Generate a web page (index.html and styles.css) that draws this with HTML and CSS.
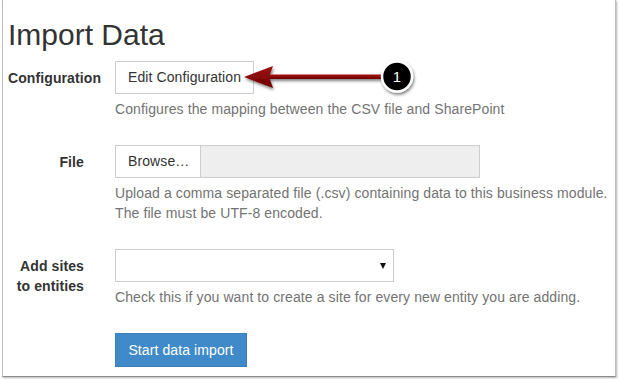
FILE: index.html
```html
<!DOCTYPE html>
<html lang="en">
<head>
    <meta charset="UTF-8">
    <title>Import Data</title>
    <link rel="stylesheet" href="styles.css">
</head>
<body>
<div class="page">
    <div class="frame">
        <h1 class="title">Import Data</h1>

        <form class="import-form">
            <div class="form-row">
                <label class="form-label">Configuration</label>
                <div class="form-control-col">
                    <button type="button" class="btn btn-default">Edit Configuration</button>
                    <p class="help-block">Configures the mapping between the CSV file and SharePoint</p>
                </div>
            </div>

            <div class="form-row">
                <label class="form-label">File</label>
                <div class="form-control-col">
                    <div class="file-group">
                        <span class="file-browse">Browse&hellip;</span>
                        <span class="file-name"></span>
                    </div>
                    <p class="help-block">Upload a comma separated file (.csv) containing data to this business module. The file must be UTF-8 encoded.</p>
                </div>
            </div>

            <div class="form-row">
                <label class="form-label">Add sites to entities</label>
                <div class="form-control-col">
                    <div class="select-box">
                        <span class="select-caret"></span>
                    </div>
                    <p class="help-block">Check this if you want to create a site for every new entity you are adding.</p>
                </div>
            </div>

            <div class="form-row">
                <div></div>
                <div class="form-control-col">
                    <button type="button" class="btn btn-primary">Start data import</button>
                </div>
            </div>
        </form>
    </div>

    <!-- callout arrow pointing at the config button -->
    <svg class="callout" width="619" height="379" viewBox="0 0 619 379">
        <defs>
            <filter id="shadow" x="-20%" y="-50%" width="140%" height="200%">
                <feDropShadow dx="1" dy="2" stdDeviation="1.5" flood-color="#000" flood-opacity="0.5"/>
            </filter>
            <linearGradient id="red" x1="0" y1="0" x2="0" y2="1">
                <stop offset="0" stop-color="#a11010"/>
                <stop offset="1" stop-color="#6d0000"/>
            </linearGradient>
        </defs>
        <g filter="url(#shadow)">
            <rect x="266" y="74.5" width="120" height="4.5" fill="url(#red)"/>
            <polygon points="244,77 273,66 269,77 273,88" fill="url(#red)"/>
            <circle cx="397" cy="76.5" r="15" fill="#000" stroke="#fff" stroke-width="2.5"/>
        </g>
        <text x="397" y="81.5" text-anchor="middle" class="callout-num">1</text>
    </svg>
</div>
</body>
</html>
```

FILE: styles.css
```css
body {
    margin: 0;
    background: #fff;
    font-family: "Liberation Sans", Arial, sans-serif;
    font-size: 14px;
    letter-spacing: 0.1px;
    color: #333;
}

.page {
    position: relative;
    width: 619px;
    height: 379px;
    overflow: hidden;
}

.frame {
    margin-left: 2px;
    width: 614px;
    padding: 18px 5px 9px 5px;
    box-sizing: border-box;
    border: 1px solid #bdbdbd;
    border-top: none;
    border-bottom-color: #8c8c8c;
    box-shadow: 1px 1px 2px rgba(0, 0, 0, 0.3);
}

.title {
    margin: 0 0 10px 0;
    font-size: 30px;
    font-weight: normal;
    letter-spacing: 0;
    line-height: 33px;
}

.import-form {
    display: flex;
    flex-direction: column;
    gap: 26px;
}

.form-row {
    display: grid;
    grid-template-columns: 76px 1fr;
    column-gap: 31px;
}

.form-label {
    padding-top: 7px;
    font-weight: bold;
    line-height: 20px;
    text-align: right;
    white-space: normal;
}

.form-control-col {
    min-width: 0;
}

.help-block {
    margin: 5px 0 0 0;
    line-height: 20px;
    color: #737373;
}

.btn {
    display: inline-block;
    padding: 6px 12px;
    font-family: inherit;
    font-size: 14px;
    letter-spacing: inherit;
    line-height: 19px;
    border: 1px solid #ccc;
    border-radius: 0;
    cursor: pointer;
}

.btn-default {
    background: #fff;
    color: #333;
}

.btn-primary {
    width: 132px;
    line-height: 20px;
    background: #408ac9;
    border-color: #3a7fbb;
    color: #fff;
}

.file-group {
    display: flex;
    width: 365px;
    height: 33px;
    box-sizing: border-box;
    border: 1px solid #ccc;
}

.file-browse {
    width: 85px;
    padding-left: 12px;
    box-sizing: border-box;
    line-height: 31px;
    background: #fff;
    border-right: 1px solid #ccc;
}

.file-name {
    flex: 1;
    background: #eee;
}

.select-box {
    display: flex;
    justify-content: flex-end;
    align-items: center;
    width: 279px;
    height: 33px;
    padding-right: 7px;
    box-sizing: border-box;
    border: 1px solid #ccc;
    background: #fff;
}

.select-caret {
    width: 0;
    height: 0;
    border-left: 3px solid transparent;
    border-right: 3px solid transparent;
    border-top: 6px solid #111;
}

.callout {
    position: absolute;
    left: 0;
    top: 0;
    pointer-events: none;
}

.callout-num {
    fill: #fff;
    font-family: "Liberation Sans", Arial, sans-serif;
    font-size: 15px;
}
```
